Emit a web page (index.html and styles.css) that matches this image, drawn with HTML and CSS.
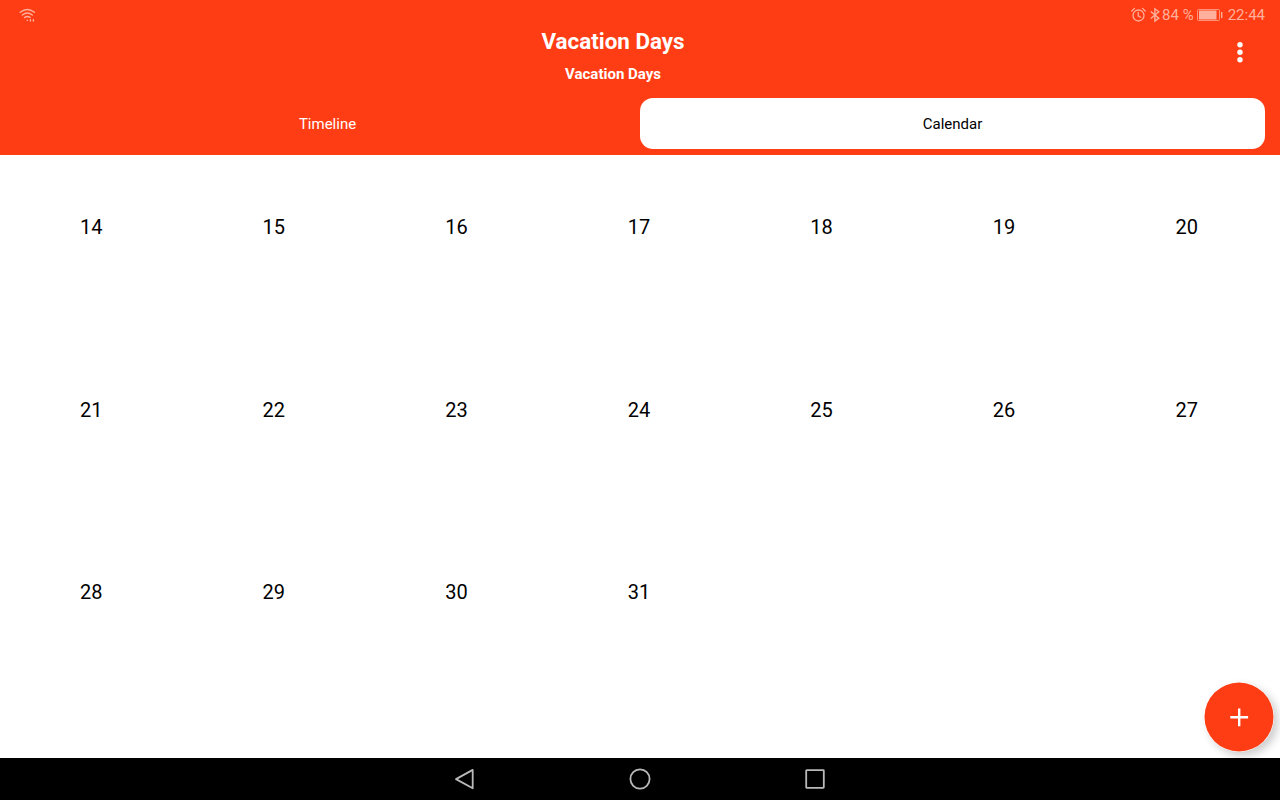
FILE: index.html
```
<!DOCTYPE html>
<html lang="en">
<head>
<meta charset="utf-8">
<title>Vacation Days</title>
<link rel="stylesheet" href="styles.css">
</head>
<body>
<div class="screen">
  <header class="header">
    <div class="status">
      <svg class="wifi" width="18" height="16" viewBox="0 0 18 16" fill="none" stroke="currentColor" stroke-width="1.4" stroke-linecap="round">
        <path d="M1.2 4.3Q8.3-1.3 15.4 4.3M3.3 7Q8.3 3 13.3 7M5.5 9.6Q8.3 7.6 11 9.4"/>
        <path d="M8.3 12.2v.4M11.4 11.6v1.4M14.4 11.6v1.4"/>
      </svg>
      <div class="status-right">
        <svg class="alarm" width="15" height="16" viewBox="0 0 15 16" fill="none" stroke="currentColor" stroke-width="1.3" stroke-linecap="round">
          <circle cx="7.5" cy="8.5" r="5.5"/>
          <path d="M7.2 5.5v3.3l2.4 1.4M.8 4l2.7-2.6M14.2 4l-2.7-2.6"/>
        </svg>
        <svg class="bluetooth" width="10" height="16" viewBox="0 0 10 16" fill="none" stroke="currentColor" stroke-width="1.4">
          <path d="M.8 4.5l8 6.6L4.9 14V1.8l3.9 3L.8 11.5"/>
        </svg>
        <span>84 %</span>
        <svg class="battery" width="26" height="12" viewBox="0 0 26 12" fill="none" stroke="currentColor">
          <rect x=".5" y=".5" width="22" height="11" rx="1" opacity=".75"/>
          <rect x="2" y="1.5" width="17.5" height="9" fill="currentColor" stroke="none"/>
          <path d="M24.7 3v6" stroke-width="1.4"/>
        </svg>
        <span>22:44</span>
      </div>
    </div>
    <div class="toolbar">
      <div class="titles">
        <h1 class="title">Vacation Days</h1>
        <h2 class="subtitle">Vacation Days</h2>
      </div>
      <svg class="more" width="54" height="24" viewBox="0 0 54 24" fill="currentColor">
        <circle cx="14" cy="4.8" r="2.7"/><circle cx="14" cy="12.3" r="2.7"/><circle cx="14" cy="19.8" r="2.7"/>
      </svg>
    </div>
    <nav class="tabs">
      <div class="tab">Timeline</div>
      <div class="tab tab-active">Calendar</div>
    </nav>
  </header>
  <main class="calendar">
    <div class="day">14</div><div class="day">15</div><div class="day">16</div><div class="day">17</div><div class="day">18</div><div class="day">19</div><div class="day">20</div>
    <div class="day">21</div><div class="day">22</div><div class="day">23</div><div class="day">24</div><div class="day">25</div><div class="day">26</div><div class="day">27</div>
    <div class="day">28</div><div class="day">29</div><div class="day">30</div><div class="day">31</div>
  </main>
  <div class="fab">
    <svg width="70" height="70" viewBox="0 0 70 70"><circle cx="35" cy="35" r="34.5" fill="#ff3d14"/><path d="M35.2 26.4v17.8M26.3 35.3h17.8" fill="none" stroke="#fff" stroke-width="2.4"/></svg>
  </div>
  <footer class="navbar">
    <svg width="22" height="22" viewBox="0 0 22 22"><path d="M18.7 1.9v18.4L2 11.1z"/></svg>
    <svg width="22" height="22" viewBox="0 0 22 22"><circle cx="11" cy="11" r="9.6"/></svg>
    <svg width="22" height="22" viewBox="0 0 22 22"><rect x="2.2" y="2.2" width="17.6" height="17.6" rx=".5"/></svg>
  </footer>
</div>
</body>
</html>
```
FILE: styles.css
```
body { margin: 0; }
.screen {
  position: relative;
  display: flex;
  flex-direction: column;
  width: 1280px;
  height: 800px;
  overflow: hidden;
  background: #fff;
  color: #000;
  font-family: Roboto, sans-serif;
}
.screen svg { display: block; flex: none; }
.header {
  box-sizing: border-box;
  height: 155px;
  background: #ff3d14;
  color: #fff;
}
.status {
  box-sizing: border-box;
  display: flex;
  justify-content: space-between;
  height: 30px;
  padding: 0 15px 0 19px;
  color: #ffb09c;
  font-size: 15px;
  line-height: 31px;
}
.wifi { margin-top: 8px; }
.status-right { display: flex; align-items: center; }
.bluetooth { margin: 0 2px 0 4px; }
.battery { margin: 0 5px 0 3px; }
.toolbar { display: flex; height: 68px; }
.titles { flex: 1; text-align: center; }
.title { margin: 0; font-size: 22.4px; line-height: 22px; font-weight: 700; }
.subtitle { margin: 13px 0 0; font-size: 15px; line-height: 18px; font-weight: 700; }
.more { margin-top: 10px; }
.tabs { display: flex; height: 50.5px; padding: 0 15px; }
.tab {
  flex: 1;
  text-align: center;
  font-size: 15px;
  line-height: 52px;
}
.tab-active { background: #fff; color: #000; border-radius: 13px; }
.calendar {
  flex: 1;
  display: grid;
  grid-template-columns: repeat(7, 182.57px);
  grid-auto-rows: 182.5px;
  align-content: start;
  min-height: 0;
  overflow: hidden;
}
.day { padding-top: 60px; text-align: center; font-size: 20px; line-height: 24px; }
.fab {
  position: absolute;
  left: 1204px;
  top: 682px;
  width: 70px;
  height: 70px;
  border-radius: 50%;
  box-shadow: 4px 4px 8px rgba(0, 0, 0, .2);
}
.navbar {
  position: relative;
  display: flex;
  align-items: center;
  justify-content: center;
  gap: 153px;
  height: 42px;
  background: #000;
  fill: none;
  stroke: #b9b9b9;
  stroke-width: 1.8;
  stroke-linejoin: round;
}
```
